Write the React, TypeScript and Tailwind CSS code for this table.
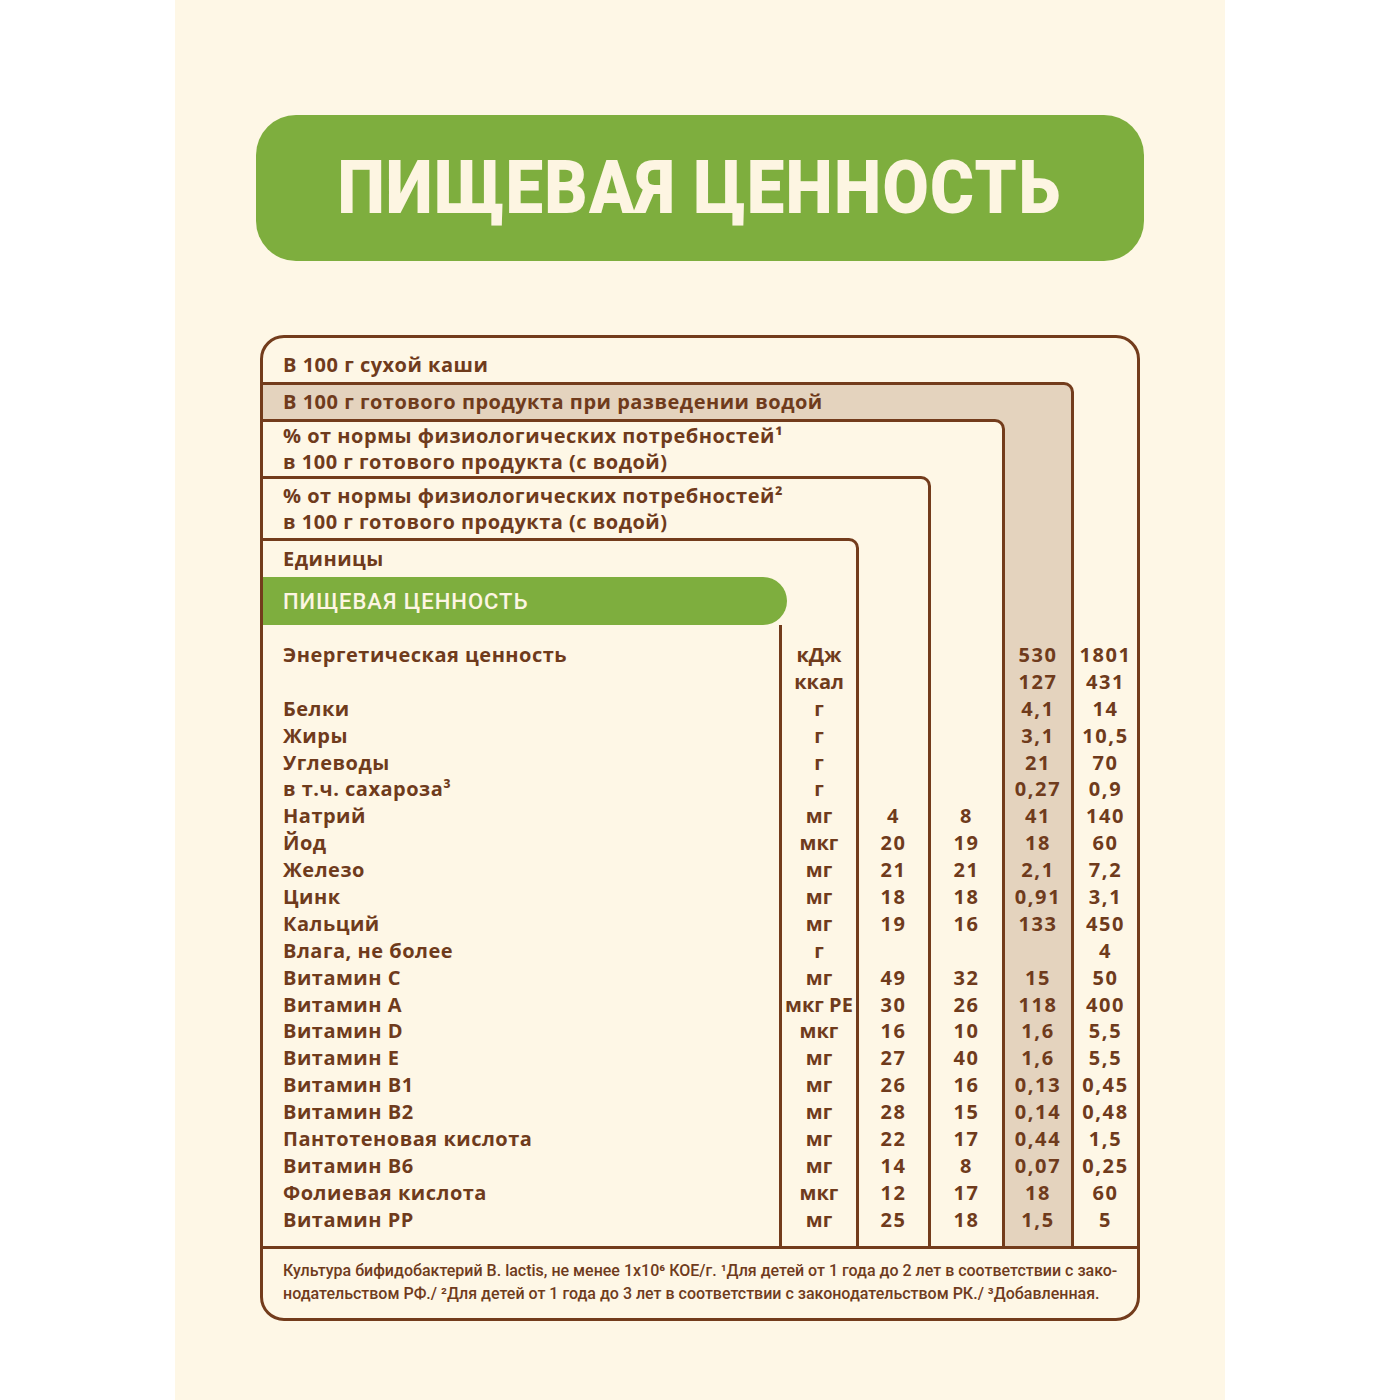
import React from "react";

const names = [
  "Энергетическая ценность",
  "",
  "Белки",
  "Жиры",
  "Углеводы",
  "в т.ч. сахароза³",
  "Натрий",
  "Йод",
  "Железо",
  "Цинк",
  "Кальций",
  "Влага, не более",
  "Витамин С",
  "Витамин А",
  "Витамин D",
  "Витамин Е",
  "Витамин В1",
  "Витамин В2",
  "Пантотеновая кислота",
  "Витамин В6",
  "Фолиевая кислота",
  "Витамин РР",
];

const units = ["кДж", "ккал", "г", "г", "г", "г", "мг", "мкг", "мг", "мг", "мг", "г", "мг", "мкг РЕ", "мкг", "мг", "мг", "мг", "мг", "мг", "мкг", "мг"];
const c2 = ["", "", "", "", "", "", "4", "20", "21", "18", "19", "", "49", "30", "16", "27", "26", "28", "22", "14", "12", "25"];
const c3 = ["", "", "", "", "", "", "8", "19", "21", "18", "16", "", "32", "26", "10", "40", "16", "15", "17", "8", "17", "18"];
const c4 = ["530", "127", "4,1", "3,1", "21", "0,27", "41", "18", "2,1", "0,91", "133", "", "15", "118", "1,6", "1,6", "0,13", "0,14", "0,44", "0,07", "18", "1,5"];
const c5 = ["1801", "431", "14", "10,5", "70", "0,9", "140", "60", "7,2", "3,1", "450", "4", "50", "400", "5,5", "5,5", "0,45", "0,48", "1,5", "0,25", "60", "5"];

function Values({ values }: { values: string[] }) {
  return (
    <>
      {values.map((v, i) => (
        <div key={i} className="h-[26.9px] leading-[26.9px] text-center whitespace-nowrap tracking-[0.08em]">
          {v || "\u00a0"}
        </div>
      ))}
    </>
  );
}

export default function App() {
  return (
    <div className="min-h-[1400px] bg-white flex justify-center">
      <div className="w-[1050px] min-h-[1400px] bg-[#fef7e6] pt-[115px] flex flex-col items-center">
        <div className="w-[888px] h-[146px] rounded-[40px] bg-[#7eae3e] flex items-center justify-center">
          <span className="inline-block scale-x-[0.906] font-['Roboto'] font-black text-[74px] leading-none text-[#fdf5e2] tracking-[0.02em] whitespace-nowrap">
            ПИЩЕВАЯ ЦЕННОСТЬ
          </span>
        </div>

        <div className="mt-[74px] w-[880px] border-[3px] border-[#733c1c] rounded-[24px] flex flex-col text-[#6f3b1c] font-['Open_Sans',sans-serif] font-bold text-[20px] tracking-[0.025em] overflow-hidden">
          <div className="h-[44px] pl-[20px] pt-[10px] flex items-center">В 100 г сухой каши</div>
          <div className="flex">
            {/* Level 1 */}
            <div className="flex-1 flex flex-col bg-[#e4d3be] border-t-[3px] border-r-[3px] border-[#733c1c] rounded-tr-[10px]">
              <div className="h-[34px] pl-[20px] flex items-center">В 100 г готового продукта при разведении водой</div>
              <div className="flex flex-1">
                {/* Level 2 */}
                <div className="flex-1 flex flex-col bg-[#fef7e6] border-t-[3px] border-r-[3px] border-[#733c1c] rounded-tr-[10px]">
                  <div className="h-[54px] pl-[20px] flex flex-col justify-center leading-[26px]">
                    <div>% от нормы физиологических потребностей¹</div>
                    <div>в 100 г готового продукта (с водой)</div>
                  </div>
                  <div className="flex flex-1">
                    {/* Level 3 */}
                    <div className="flex-1 flex flex-col border-t-[3px] border-r-[3px] border-[#733c1c] rounded-tr-[10px]">
                      <div className="h-[59px] pl-[20px] flex flex-col justify-center leading-[26px]">
                        <div>% от нормы физиологических потребностей²</div>
                        <div>в 100 г готового продукта (с водой)</div>
                      </div>
                      <div className="flex flex-1">
                        {/* Level 4 */}
                        <div className="flex-1 flex flex-col border-t-[3px] border-r-[3px] border-[#733c1c] rounded-tr-[10px]">
                          <div className="h-[36px] pl-[20px] flex items-center">Единицы</div>
                          <div className="-ml-[3px] w-[527px] h-[48px] bg-[#7eae3e] rounded-r-[24px] pl-[23px] flex items-center font-['Roboto'] font-medium text-[22px] text-[#fdf5e2] tracking-[0.045em]">
                            ПИЩЕВАЯ ЦЕННОСТЬ
                          </div>
                          <div className="flex flex-1">
                            <div className="flex-1 pl-[20px] pt-[17px] pb-[12px]">
                              {names.map((n, i) => (
                                <div key={i} className="h-[26.9px] leading-[26.9px] whitespace-nowrap">
                                  {n || "\u00a0"}
                                </div>
                              ))}
                            </div>
                            <div className="w-[77px] border-l-[3px] border-[#733c1c] pt-[17px]">
                              {units.map((u, i) => (
                                <div key={i} className="h-[26.9px] leading-[26.9px] text-center whitespace-nowrap tracking-normal">
                                  {u}
                                </div>
                              ))}
                            </div>
                          </div>
                        </div>
                        <div className="w-[69px] pt-[104px]">
                          <Values values={c2} />
                        </div>
                      </div>
                    </div>
                    <div className="w-[71px] pt-[166px]">
                      <Values values={c3} />
                    </div>
                  </div>
                </div>
                <div className="w-[66px] pt-[223px]">
                  <Values values={c4} />
                </div>
              </div>
            </div>
            <div className="w-[63px] pt-[260px]">
              <Values values={c5} />
            </div>
          </div>
          <div className="border-t-[3px] border-[#733c1c] pl-[20px] pt-[10px] pb-[13px] font-['Roboto'] font-medium text-[16px] leading-[23px] tracking-normal whitespace-nowrap">
            <div>Культура бифидобактерий B. lactis, не менее 1x10⁶ КОЕ/г. ¹Для детей от 1 года до 2 лет в соответствии с зако-</div>
            <div>нодательством РФ./ ²Для детей от 1 года до 3 лет в соответствии с законодательством РК./ ³Добавленная.</div>
          </div>
        </div>
      </div>
    </div>
  );
}
